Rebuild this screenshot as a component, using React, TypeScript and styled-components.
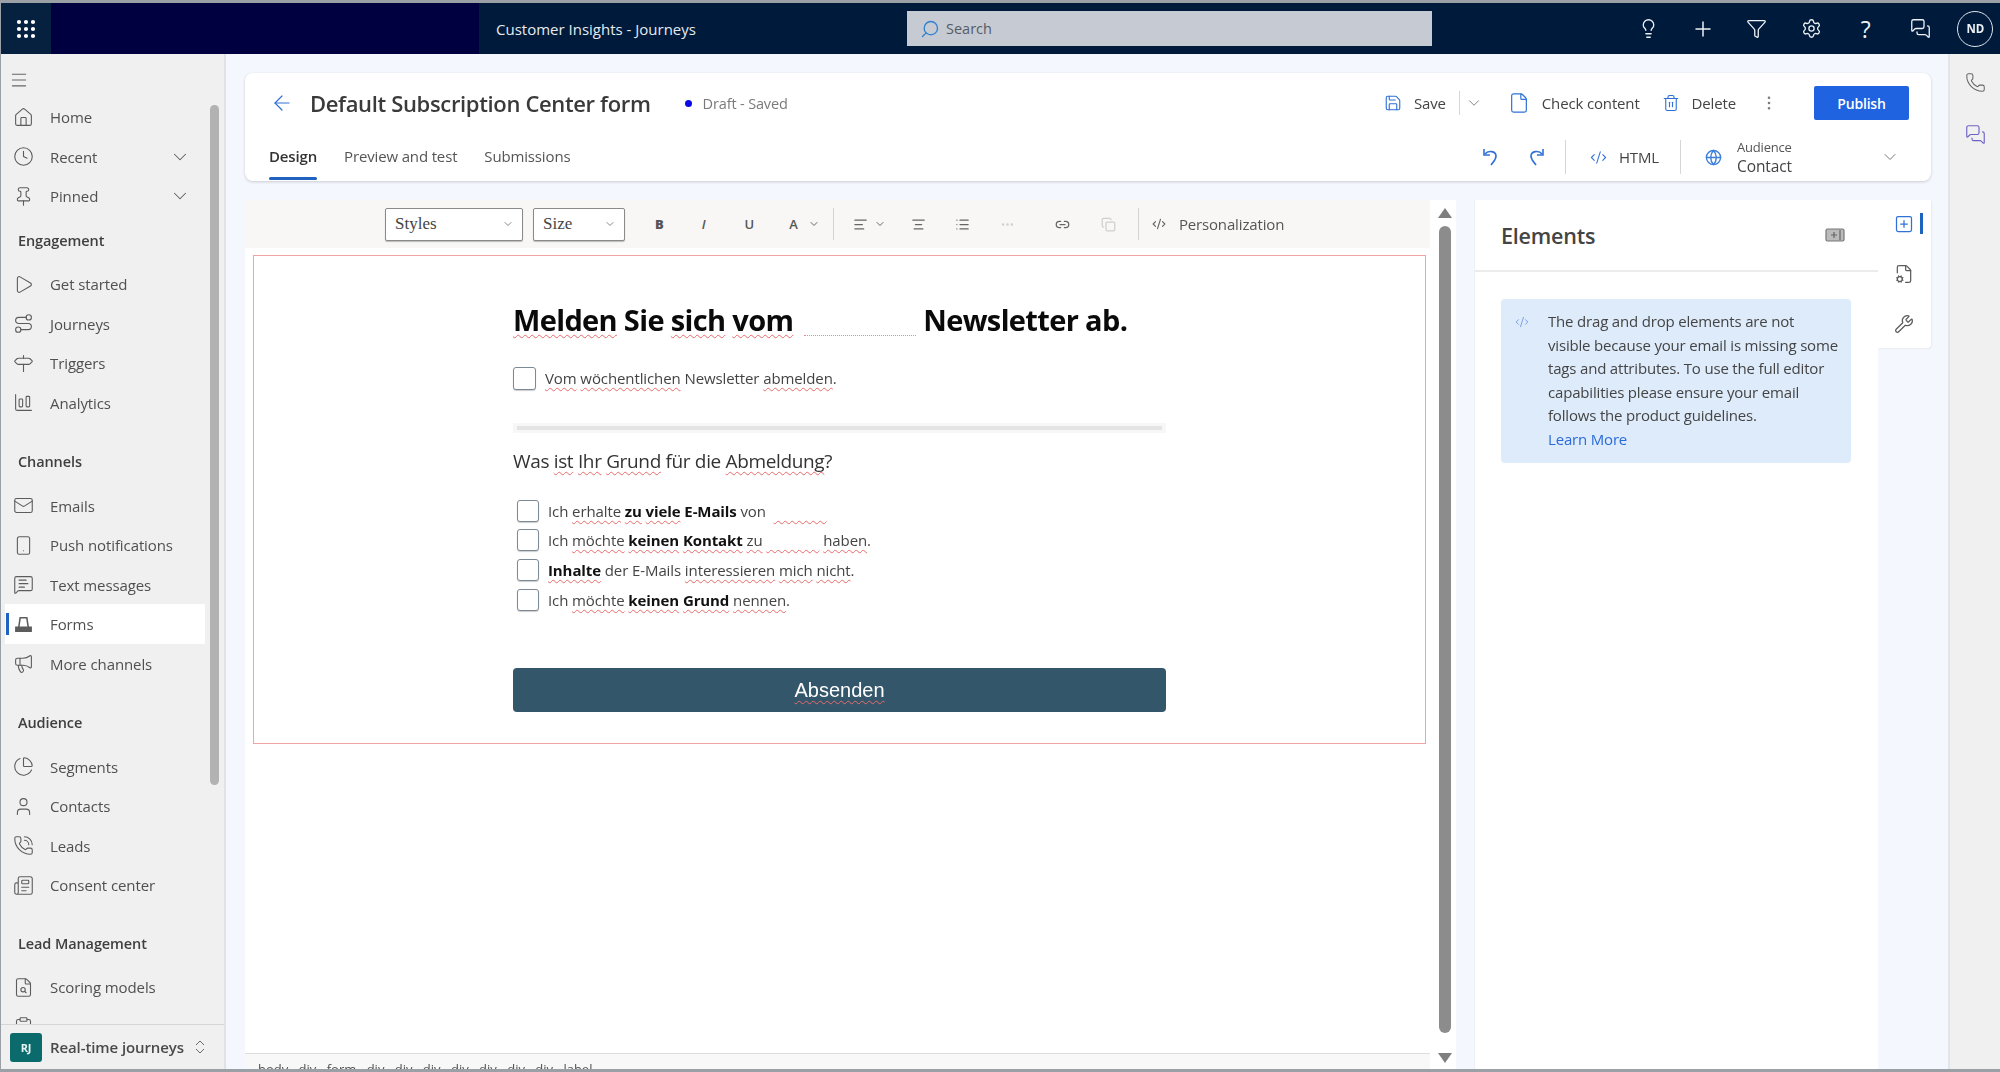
import React from "react";
import styled, { createGlobalStyle } from "styled-components";
import {
  Grip, Search, Lightbulb, Plus, Funnel, Settings, MessagesSquare, Menu, House, Clock, Pin, ChevronDown, Play,
  Route, Signpost, ChartColumnBig, Mail, Smartphone, MessageSquareText, ClipboardPen, Megaphone, ChartPie, User,
  PhoneCall, Newspaper, FileSearch, ChevronsUpDown, Phone, ArrowLeft, Save, File, Trash2, EllipsisVertical,
  CodeXml, Globe, AlignLeft, AlignCenter, List, Ellipsis, Link2, Copy, SquarePlus, FileCog, Wrench,
} from "lucide-react";

const FONT = `"Open Sans", "Noto Sans", "Liberation Sans", sans-serif`;

const Global = createGlobalStyle`
  html, body { margin: 0; padding: 0; height: 1072px; overflow: hidden; background: #9aa0a6; }
  * { box-sizing: border-box; }
  body { font-family: ${FONT}; }
`;

const Shell = styled.div`
  width: 2000px; height: 1072px; padding: 3px 0 3px 1px; display: flex; flex-direction: column;
  overflow: hidden; filter: blur(0.6px);
`;
const TopBar = styled.header`
  height: 51px; flex: none; display: flex; align-items: center; background: #001a3b; color: #fff;
`;
const Waffle = styled.div`
  width: 50px; height: 100%; display: flex; align-items: center; justify-content: center; background: #06203f;
`;
const BrandBlock = styled.div`width: 428px; height: 100%; background: #000040;`;
const AppName = styled.div`
  margin-left: 17px; width: 411px; font-size: 15px; color: #e6ebf0;
`;
const SearchBox = styled.div`
  width: 525px; height: 35px; background: #c6cad2; display: flex; align-items: center; padding-left: 13px; gap: 6px;
  font-size: 14.5px; color: #555c66;
  svg { transform: scaleX(-1); color: #2f7fd0; }
`;
const TopIcons = styled.div`
  margin-left: 189px; display: flex; align-items: center;
`;
const TopIcon = styled.div`
  width: 54.4px; display: flex; justify-content: center; align-items: center; color: #eef1f5; font-size: 23px;
`;
const Avatar = styled.div`
  width: 36px; height: 36px; margin-left: 10px; border-radius: 50%; border: 1.5px solid #dfe4ea; display: flex;
  align-items: center; justify-content: center; font-size: 11.5px; font-weight: 700; color: #eef1f5;
`;

const Body = styled.div`flex: 1; min-height: 0; display: flex;`;
const Sidebar = styled.aside`
  width: 225px; flex: none; position: relative; display: flex; flex-direction: column; background: #f0f0f0;
  border-right: 2px solid #e2e2e2;
`;
const SideScroll = styled.div`
  position: absolute; right: 5px; top: 51px; width: 9px; height: 680px; background: #b2b2b2; border-radius: 5px;
`;
const Burger = styled.div`
  height: 43.6px; flex: none; padding: 16px 0 0 8px; color: #666;
`;
const NavList = styled.nav`flex: 1; min-height: 0; overflow: hidden;`;
const NavRow = styled.div<{ $active?: boolean }>`
  position: relative; width: 200px; height: 39.5px; margin-left: 4px; display: flex; align-items: center;
  padding-left: 8px; gap: 16px; font-size: 15px; letter-spacing: -0.1px; color: #505050;
  background: ${(p) => (p.$active ? "#fff" : "transparent")};
  svg { flex: none; color: #5c5c5c; }
  ${(p) => p.$active && `&::before { content: ""; position: absolute; left: 1px; top: 9px; bottom: 9px; width: 3px; background: #1f63c0; }`}
`;
const NavChevron = styled.span`margin-left: auto; margin-right: 14px; display: flex;`;
const NavHeader = styled.div<{ $top: number }>`
  height: 20px; line-height: 20px; margin: ${(p) => p.$top}px 0 13.6px 17px; font-size: 14.5px; font-weight: 600;
  letter-spacing: -0.1px; color: #3f3f3f;
`;
const SideFoot = styled.div`
  height: 45px; flex: none; border-top: 1px solid #d6d6d6; display: flex; align-items: center; padding-left: 9px;
  font-size: 15px; font-weight: 600; letter-spacing: -0.1px; color: #4a4a4a;
  svg { margin-left: 7px; color: #666; }
`;
const AreaBadge = styled.div`
  width: 32px; height: 29px; margin-right: 8px; background: #0b6a6b; border-radius: 3px; color: #e8f3f3; display: flex;
  align-items: center; justify-content: center; font-size: 11px; font-weight: 700;
`;

const Main = styled.main`
  flex: 1; min-width: 0; background: #f4f7fd; padding: 19px 17px 0 19px; display: flex; flex-direction: column; gap: 19px;
`;
const HeaderCard = styled.section`
  height: 108px; flex: none; background: #fff; border-radius: 8px; box-shadow: 0 1px 3px rgba(0,0,0,.18);
  display: flex; flex-direction: column;
`;
const TitleRow = styled.div`
  height: 60px; flex: none; display: flex; align-items: center; padding: 0 22px 0 25px;
`;
const BackIcon = styled.span`display: flex; color: #2f72d6; margin-right: 16px;`;
const Title = styled.h1`
  margin: 0; font-size: 22px; font-weight: 600; letter-spacing: -0.35px; color: #3a3a3a; white-space: nowrap;
`;
const StatusDot = styled.span`
  width: 7px; height: 7px; margin-left: 34px; margin-right: 11px; border-radius: 50%; background: #0a0ae6;
`;
const Status = styled.span`font-size: 14.5px; letter-spacing: -0.15px; color: #7a7a7a;`;
const Action = styled.div<{ $ml: number; $first?: boolean }>`
  display: flex; align-items: center; gap: 12px; font-size: 15px; letter-spacing: -0.15px; color: #444;
  margin-left: ${(p) => (p.$first ? "auto" : `${p.$ml}px`)};
  svg { color: #2f72d6; }
`;
const GreyIcon = styled.span<{ $ml: number; $tint?: string; $auto?: boolean }>`
  margin-left: ${(p) => (p.$auto ? "auto" : `${p.$ml}px`)}; display: flex; color: ${(p) => p.$tint ?? "#777"};
`;
const Sep = styled.span<{ $ml: number; $h: number }>`
  width: 1px; height: ${(p) => p.$h}px; margin-left: ${(p) => p.$ml}px; background: #d6d6d6; flex: none;
`;
const Publish = styled.button`
  width: 95px; height: 34px; margin-left: 36px; border: none; border-radius: 2px; background: #1f63e0; color: #fff;
  font: 600 14px ${FONT}; letter-spacing: -0.2px;
`;
const TabRow = styled.div`
  flex: 1; display: flex; align-items: center; padding: 0 31px 0 24px; position: relative;
`;
const Tab = styled.div<{ $active?: boolean; $ml: number }>`
  position: relative; margin-left: ${(p) => p.$ml}px; font-size: 15px; letter-spacing: -0.15px; margin-top: -2px;
  color: ${(p) => (p.$active ? "#333" : "#555")};
  font-weight: ${(p) => (p.$active ? 600 : 400)};
  ${(p) => p.$active && `&::after { content: ""; position: absolute; left: 0; right: 0; top: 31px; height: 3px; border-radius: 2px; background: #1f63c0; }`}
`;
const AudienceStack = styled.div`
  display: flex; flex-direction: column; margin-left: 15px; width: 143px; color: #444;
`;
const AudienceLabel = styled.span`font-size: 13px; line-height: 18px; letter-spacing: -0.2px; color: #555;`;
const AudienceValue = styled.span`font-size: 15.5px; line-height: 20px; letter-spacing: -0.1px;`;

const Workspace = styled.div`flex: 1; min-height: 0; display: flex;`;
const EditorPanel = styled.section`
  width: 1211px; flex: none; display: flex; background: #fff; border-radius: 6px 6px 0 0;
`;
const EditorMain = styled.div`flex: 1; min-width: 0; display: flex; flex-direction: column;`;
const Toolbar = styled.div`
  height: 48px; flex: none; display: flex; align-items: center; background: #f8f7f5; padding-left: 140px;
`;
const Dropdown = styled.div<{ $w: number; $ml: number }>`
  width: ${(p) => p.$w}px; height: 33px; margin-left: ${(p) => p.$ml}px; display: flex; align-items: center;
  justify-content: space-between; padding: 0 8px 0 9px; background: #fff; border: 1px solid #8a8a8a; border-radius: 2px;
  box-shadow: 0 1px 1px rgba(0,0,0,.25); font: 17px "Liberation Serif", "DejaVu Serif", serif; color: #444;
  svg { color: #888; }
`;
const ToolGlyph = styled.span<{ $ml: number; $weight?: number; $italic?: boolean }>`
  margin-left: ${(p) => p.$ml}px; font-size: 13px; color: #555; font-weight: ${(p) => p.$weight ?? 600};
  font-style: ${(p) => (p.$italic ? "italic" : "normal")}; line-height: 1; display: flex; align-items: center;
`;
const ToolIcon = styled.span<{ $ml: number; $faded?: boolean }>`
  margin-left: ${(p) => p.$ml}px; display: flex; color: ${(p) => (p.$faded ? "#cfcfcf" : "#666")};
`;
const ToolSep = styled.span<{ $ml: number }>`
  width: 1px; height: 32px; margin-left: ${(p) => p.$ml}px; background: #d3d3d3; flex: none;
`;
const ToolText = styled.span`margin-left: 13px; font-size: 15px; letter-spacing: -0.15px; color: #555;`;
const Canvas = styled.div`flex: 1; min-height: 0; background: #fff; padding: 7px 4px 0 8px;`;
const Frame = styled.div`
  height: 489px; border: 1.5px solid #f3a3a3; padding: 44px 0 0 259px; color: #333;
`;
const FormHeading = styled.h2`
  margin: 0; height: 40px; line-height: 40px; font-size: 29px; font-weight: 700; color: #0a0a0a; letter-spacing: -0.65px;
  white-space: nowrap; display: flex;
`;
const Spell = styled.span`
  text-decoration: underline wavy #e86a6a 1px; text-underline-offset: 3px; text-decoration-skip-ink: none;
`;
const DottedGap = styled.span`
  display: inline-block; width: 112px; margin: 0 7px 0 11px; height: 36px; border-bottom: 1.5px dotted #e88;
`;
const CheckRow = styled.label<{ $h: number; $ml?: number; $mt?: number }>`
  display: flex; align-items: center; height: ${(p) => p.$h}px; margin: ${(p) => p.$mt ?? 0}px 0 0 ${(p) => p.$ml ?? 0}px; gap: 9px;
  font-size: 15px; letter-spacing: -0.1px; color: #444; white-space: pre;
  b { color: #111; font-weight: 700; }
`;
const CheckBox = styled.span<{ $size: number }>`
  width: ${(p) => p.$size}px; height: ${(p) => p.$size}px; flex: none; border: 1.5px solid #7b8a96; border-radius: 3px;
  background: #fff; box-shadow: 0 1px 1px rgba(0,0,0,.2);
`;
const Divider = styled.div`
  width: 653px; height: 10px; margin-top: 32px; background: #f7f7f7; padding: 3px 4px;
  &::before { content: ""; display: block; height: 4px; background: #e4e4e4; }
`;
const Question = styled.p`
  margin: 15px 0 21px; height: 27px; line-height: 27px; font-size: 19px; letter-spacing: -0.35px; color: #333;
`;
const SubmitBar = styled.button`
  display: block; width: 653px; height: 44px; margin-top: 54px; border: none; border-radius: 4px; background: #34566a;
  color: #fff; font: 20px "Liberation Sans", Arial, sans-serif;
`;
const PathBar = styled.div`
  height: 16px; flex: none; border-top: 1px solid #dedede; background: #f8f8f8; padding: 8px 0 0 13px;
  font: 13px/14px ${FONT}; word-spacing: 7px; color: #555; overflow: hidden; white-space: nowrap;
`;
const ScrollColumn = styled.div`
  width: 26px; flex: none; display: flex; flex-direction: column; align-items: center; padding: 8px 0 6px 4px;
  background: #fff;
`;
const ScrollThumb = styled.div`
  width: 12px; flex: 1; margin: 8px 0 20px; border-radius: 6px; background: #8c8c8c;
`;
const ScrollArrow = styled.div<{ $down?: boolean }>`
  width: 0; height: 0; border-left: 7px solid transparent; border-right: 7px solid transparent;
  ${(p) => (p.$down ? "border-top: 10px solid #7f7f7f;" : "border-bottom: 10px solid #7f7f7f;")}
`;
const ElementsPanel = styled.section`
  width: 404px; margin-left: 18px; flex: none; background: #fff; border-left: 1px solid #edf0f5; display: flex; flex-direction: column;
`;
const ElementsHead = styled.div`
  height: 72px; flex: none; display: flex; align-items: center; justify-content: space-between; padding: 0 33px 0 26px;
  border-bottom: 2px solid #ececec; color: #777;
`;
const ElementsTitle = styled.h2`margin: 0; font-size: 21.5px; font-weight: 600; letter-spacing: -0.2px; color: #444;`;
const InfoBox = styled.div`
  margin: 27px 27px 0 26px; height: 164px; background: #deebfb; border-radius: 4px; display: flex; padding: 11px 12px 0 14px; gap: 19px;
  color: #444; font-size: 15px; line-height: 23.5px; letter-spacing: -0.18px;
  svg { flex: none; margin-top: 5px; color: #6f97e6; }
  a { color: #2b6bd8; display: block; }
`;
const SideTabs = styled.div`
  width: 53px; height: 148px; flex: none; background: #fff; display: flex; flex-direction: column; align-items: flex-start;
  padding: 14px 0 0 16px; gap: 30px; border-radius: 0 0 4px 0; box-shadow: 1px 1px 2px rgba(0,0,0,.05);
`;
const SideTab = styled.div<{ $active?: boolean }>`
  position: relative; display: flex; color: ${(p) => (p.$active ? "#2f72d6" : "#5c5c5c")};
  ${(p) => p.$active && `&::after { content: ""; position: absolute; left: 26px; top: -1px; width: 3px; height: 21px; background: #1f63c0; }`}
`;
const Rail = styled.aside`
  width: 52px; flex: none; background: #f0f0f0; border-left: 2px solid #e2e5ea; display: flex; flex-direction: column; align-items: center;
  padding-top: 18px; gap: 31px;
  svg { display: block; }
`;

const FormIcon = () => (
  <svg width="21" height="21" viewBox="0 0 22 22" fill="none" stroke="currentColor" strokeWidth="1.6">
    <path d="M6 14 7.5 4h7L16 14" /><path d="M3 14h16v4H3z" fill="currentColor" />
  </svg>
);
const CollapseIcon = () => (
  <svg width="20" height="14" viewBox="0 0 20 14" fill="#bbb" stroke="#777" strokeWidth="1.2">
    <rect x="1" y="1" width="18" height="12" rx="1.5" />
    <path d="M9 4v6M6 7h6M15 2v10" stroke="#666" />
  </svg>
);
const UndoIcon = ({ flip }: { flip?: boolean }) => (
  <svg width="18" height="20" viewBox="0 0 18 20" fill="none" stroke="#2f72d6" strokeWidth="1.6" style={flip ? { transform: "scaleX(-1)" } : undefined}>
    <path d="M3 7c3-4 11-3 11 2 0 4-3 6-5 9" /><path d="M2 2v6h6" />
  </svg>
);

const icon = { size: 21, strokeWidth: 1.25 };
const GAP = "\u00a0".repeat(14);

const Row = ({ i, label, chev, active }: { i: React.ReactNode; label?: string; chev?: boolean; active?: boolean }) => (
  <NavRow $active={active}>
    {i}
    {label}
    {chev && <NavChevron><ChevronDown size={22} strokeWidth={1.1} /></NavChevron>}
  </NavRow>
);

export default function App() {
  return (
    <>
      <Global />
      <Shell>
        <TopBar>
          <Waffle><Grip size={24} strokeWidth={2.2} /></Waffle>
          <BrandBlock />
          <AppName>Customer Insights - Journeys</AppName>
          <SearchBox><Search size={20} strokeWidth={1.6} />Search</SearchBox>
          <TopIcons>
            <TopIcon><Lightbulb size={21} strokeWidth={1.5} /></TopIcon>
            <TopIcon><Plus size={24} strokeWidth={1.5} /></TopIcon>
            <TopIcon><Funnel size={21} strokeWidth={1.5} /></TopIcon>
            <TopIcon><Settings size={21} strokeWidth={1.5} /></TopIcon>
            <TopIcon>?</TopIcon>
            <TopIcon><MessagesSquare size={21} strokeWidth={1.5} /></TopIcon>
            <Avatar>ND</Avatar>
          </TopIcons>
        </TopBar>
        <Body>
          <Sidebar>
            <Burger><Menu size={20} strokeWidth={1.3} /></Burger>
            <NavList>
              <Row i={<House {...icon} />} label="Home" />
              <Row i={<Clock {...icon} />} label="Recent" chev />
              <Row i={<Pin {...icon} />} label="Pinned" chev />
              <NavHeader $top={14.6}>Engagement</NavHeader>
              <Row i={<Play {...icon} />} label="Get started" />
              <Row i={<Route {...icon} />} label="Journeys" />
              <Row i={<Signpost {...icon} />} label="Triggers" />
              <Row i={<ChartColumnBig {...icon} />} label="Analytics" />
              <NavHeader $top={30}>Channels</NavHeader>
              <Row i={<Mail {...icon} />} label="Emails" />
              <Row i={<Smartphone {...icon} />} label="Push notifications" />
              <Row i={<MessageSquareText {...icon} />} label="Text messages" />
              <Row i={<FormIcon />} label="Forms" active />
              <Row i={<Megaphone {...icon} />} label="More channels" />
              <NavHeader $top={30}>Audience</NavHeader>
              <Row i={<ChartPie {...icon} />} label="Segments" />
              <Row i={<User {...icon} />} label="Contacts" />
              <Row i={<PhoneCall {...icon} />} label="Leads" />
              <Row i={<Newspaper {...icon} />} label="Consent center" />
              <NavHeader $top={29}>Lead Management</NavHeader>
              <Row i={<FileSearch {...icon} />} label="Scoring models" />
              <Row i={<ClipboardPen {...icon} />} />
            </NavList>
            <SideFoot>
              <AreaBadge>RJ</AreaBadge>
              Real-time journeys
              <ChevronsUpDown size={18} strokeWidth={1.3} />
            </SideFoot>
            <SideScroll />
          </Sidebar>
          <Main>
            <HeaderCard>
              <TitleRow>
                <BackIcon><ArrowLeft size={24} strokeWidth={1.2} /></BackIcon>
                <Title>Default Subscription Center form</Title>
                <StatusDot />
                <Status>Draft - Saved</Status>
                <Action $ml={0} $first><Save size={18} strokeWidth={1.5} />Save</Action>
                <Sep $ml={13} $h={24} />
                <GreyIcon $ml={5}><ChevronDown size={18} strokeWidth={1.2} /></GreyIcon>
                <Action $ml={25}><File size={22} strokeWidth={1.3} />Check content</Action>
                <Action $ml={22}><Trash2 size={18} strokeWidth={1.5} />Delete</Action>
                <GreyIcon $ml={24}><EllipsisVertical size={18} strokeWidth={1.5} /></GreyIcon>
                <Publish>Publish</Publish>
              </TitleRow>
              <TabRow>
                <Tab $active $ml={0}>Design</Tab>
                <Tab $ml={27}>Preview and test</Tab>
                <Tab $ml={27}>Submissions</Tab>
                <GreyIcon $ml={0} $auto><UndoIcon /></GreyIcon>
                <GreyIcon $ml={27}><UndoIcon flip /></GreyIcon>
                <Sep $ml={20} $h={34} />
                <Action $ml={24}><CodeXml size={17} strokeWidth={1.5} />HTML</Action>
                <Sep $ml={21} $h={34} />
                <GreyIcon $ml={24} $tint="#3f7fdc"><Globe size={17} strokeWidth={2} /></GreyIcon>
                <AudienceStack>
                  <AudienceLabel>Audience</AudienceLabel>
                  <AudienceValue>Contact</AudienceValue>
                </AudienceStack>
                <GreyIcon $ml={0}><ChevronDown size={20} strokeWidth={1.2} /></GreyIcon>
              </TabRow>
            </HeaderCard>
            <Workspace>
              <EditorPanel>
                <EditorMain>
                  <Toolbar>
                    <Dropdown $w={138} $ml={0}>Styles<ChevronDown size={12} /></Dropdown>
                    <Dropdown $w={92} $ml={10}>Size<ChevronDown size={12} /></Dropdown>
                    <ToolGlyph $ml={30} $weight={800}>B</ToolGlyph>
                    <ToolGlyph $ml={38} $italic>I</ToolGlyph>
                    <ToolGlyph $ml={39}>U</ToolGlyph>
                    <ToolGlyph $ml={35}>A</ToolGlyph>
                    <ToolIcon $ml={10}><ChevronDown size={12} /></ToolIcon>
                    <ToolSep $ml={13} />
                    <ToolIcon $ml={19}><AlignLeft size={15} strokeWidth={2} /></ToolIcon>
                    <ToolIcon $ml={6}><ChevronDown size={12} /></ToolIcon>
                    <ToolIcon $ml={25}><AlignCenter size={15} strokeWidth={2} /></ToolIcon>
                    <ToolIcon $ml={29}><List size={15} strokeWidth={2} /></ToolIcon>
                    <ToolIcon $ml={30} $faded><Ellipsis size={15} /></ToolIcon>
                    <ToolIcon $ml={40}><Link2 size={15} strokeWidth={2} /></ToolIcon>
                    <ToolIcon $ml={31} $faded><Copy size={15} /></ToolIcon>
                    <ToolSep $ml={22} />
                    <ToolIcon $ml={13}><CodeXml size={14} /></ToolIcon>
                    <ToolText>Personalization</ToolText>
                  </Toolbar>
                  <Canvas>
                    <Frame>
                      <FormHeading>
                        <Spell>Melden</Spell>&nbsp;Sie&nbsp;<Spell>sich</Spell>&nbsp;<Spell>vom</Spell>
                        <DottedGap />Newsletter ab.
                      </FormHeading>
                      <CheckRow $h={26} $mt={25}>
                        <CheckBox $size={23} />
                        <span><Spell>Vom</Spell> <Spell>wöchentlichen</Spell> Newsletter <Spell>abmelden</Spell>.</span>
                      </CheckRow>
                      <Divider />
                      <Question>Was <Spell>ist</Spell> <Spell>Ihr</Spell> <Spell>Grund</Spell> für die <Spell>Abmeldung</Spell>?</Question>
                      <CheckRow $h={29.6} $ml={4}>
                        <CheckBox $size={22} />
                        <span>Ich <Spell>erhalte</Spell> <b><Spell>zu</Spell> <Spell>viele</Spell> E-Mails</b> von  <Spell>{GAP}</Spell></span>
                      </CheckRow>
                      <CheckRow $h={29.6} $ml={4}>
                        <CheckBox $size={22} />
                        <span>Ich <Spell>möchte</Spell> <b><Spell>keinen</Spell> <Spell>Kontakt</Spell></b> <Spell>zu</Spell> <Spell>{GAP}</Spell> <Spell>haben</Spell>.</span>
                      </CheckRow>
                      <CheckRow $h={29.6} $ml={4}>
                        <CheckBox $size={22} />
                        <span><b><Spell>Inhalte</Spell></b> der E-Mails <Spell>interessieren</Spell> <Spell>mich</Spell> <Spell>nicht</Spell>.</span>
                      </CheckRow>
                      <CheckRow $h={29.6} $ml={4}>
                        <CheckBox $size={22} />
                        <span>Ich <Spell>möchte</Spell> <b><Spell>keinen</Spell> <Spell>Grund</Spell></b> <Spell>nennen</Spell>.</span>
                      </CheckRow>
                      <SubmitBar><Spell>Absenden</Spell></SubmitBar>
                    </Frame>
                  </Canvas>
                  <PathBar>body div form div div div div div div div label</PathBar>
                </EditorMain>
                <ScrollColumn>
                  <ScrollArrow />
                  <ScrollThumb />
                  <ScrollArrow $down />
                </ScrollColumn>
              </EditorPanel>
              <ElementsPanel>
                <ElementsHead>
                  <ElementsTitle>Elements</ElementsTitle>
                  <CollapseIcon />
                </ElementsHead>
                <InfoBox>
                  <CodeXml size={14} strokeWidth={1.5} />
                  <div>
                    The drag and drop elements are not visible because your email is missing some tags and attributes. To use the full editor capabilities please ensure your email follows the product guidelines.
                    <a>Learn More</a>
                  </div>
                </InfoBox>
              </ElementsPanel>
              <SideTabs>
                <SideTab $active><SquarePlus size={20} strokeWidth={1.5} /></SideTab>
                <SideTab><FileCog size={20} strokeWidth={1.5} /></SideTab>
                <SideTab><Wrench size={20} strokeWidth={1.5} /></SideTab>
              </SideTabs>
            </Workspace>
          </Main>
          <Rail>
            <Phone size={21} strokeWidth={1.2} color="#666" />
            <MessagesSquare size={21} strokeWidth={1.3} color="#6d62c4" />
          </Rail>
        </Body>
      </Shell>
    </>
  );
}
